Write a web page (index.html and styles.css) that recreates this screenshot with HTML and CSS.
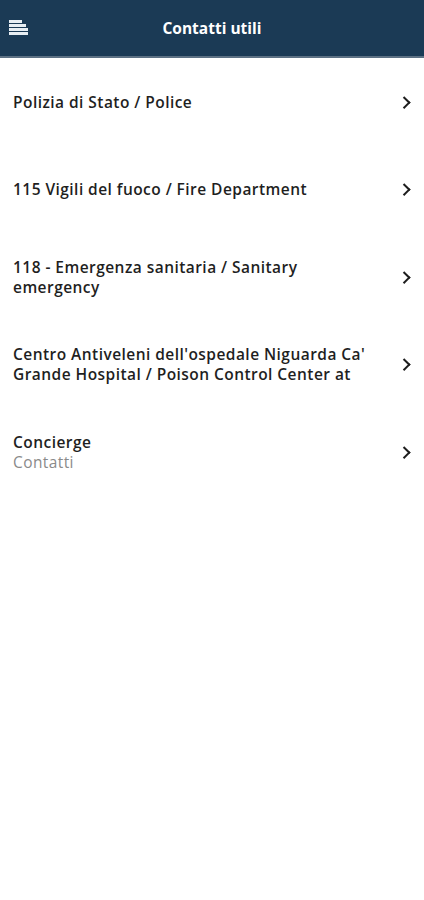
FILE: index.html
```html
<!DOCTYPE html>
<html>
<head>
<meta charset="utf-8">
<link rel="stylesheet" href="styles.css">
</head>
<body>
<header class="topbar">
  <button class="menu-btn" aria-label="menu">
    <svg width="20" height="16" viewBox="0 0 20 16">
      <rect x="0" y="0" width="13" height="3" fill="#e8eef3"/>
      <rect x="0" y="4" width="17" height="3" fill="#e8eef3"/>
      <rect x="0" y="8" width="19" height="3" fill="#e8eef3"/>
      <rect x="0" y="12" width="19" height="3" fill="#e8eef3"/>
    </svg>
  </button>
  <h1 class="title">Contatti utili</h1>
</header>
<ul class="list">
  <li class="item"><div class="text"><div class="name">Polizia di Stato / Police</div></div><span class="chev"></span></li>
  <li class="item"><div class="text"><div class="name">115 Vigili del fuoco / Fire Department</div></div><span class="chev"></span></li>
  <li class="item"><div class="text"><div class="name">118 - Emergenza sanitaria / Sanitary emergency</div></div><span class="chev"></span></li>
  <li class="item"><div class="text"><div class="name">Centro Antiveleni dell'ospedale Niguarda Ca' Grande Hospital / Poison Control Center at</div></div><span class="chev"></span></li>
  <li class="item"><div class="text"><div class="name">Concierge</div><div class="sub">Contatti</div></div><span class="chev"></span></li>
</ul>
</body>
</html>
```
FILE: styles.css
```css
html, body { margin: 0; padding: 0; background: #fff; }
body { font-family: "Open Sans", "Noto Sans", sans-serif; color: #1d1d1d; }
.topbar {
  height: 56px;
  background: #1b3a55;
  border-bottom: 2px solid #5d7184;
  display: flex;
  align-items: center;
  position: relative;
}
.menu-btn {
  background: none; border: 0; padding: 0; margin-left: 9px;
  display: flex; width: 20px; height: 16px; margin-top: -1px;
}
.title {
  position: absolute; left: 0; right: 0; top: 0; bottom: 0;
  margin: 0; display: flex; align-items: center; justify-content: center;
  font-size: 15.5px; font-weight: 700; color: #fff; letter-spacing: 0;
  pointer-events: none;
}
.list { list-style: none; margin: 0; padding: 0; }
.item {
  height: 87.5px;
  display: flex; align-items: center;
  padding: 0 13px 0 13px;
}
.text { flex: 1; max-width: 362px; }
.name { font-size: 15.5px; font-weight: 600; line-height: 20px; color: #1f1f1f; letter-spacing: 0.45px; }
.sub { font-size: 15.5px; font-weight: 400; line-height: 20px; color: #8a8a8a; letter-spacing: 0.4px; }
.chev {
  width: 6.5px; height: 6.5px;
  border-right: 2.5px solid #1d1d1d; border-top: 2.5px solid #1d1d1d;
  transform: rotate(45deg);
  margin-left: auto;
  margin-right: 3px;
}
```
